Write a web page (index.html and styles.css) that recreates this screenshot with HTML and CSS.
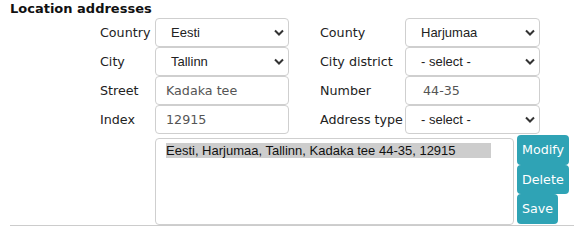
FILE: index.html
```html
<!DOCTYPE html>
<html lang="en">
<head>
  <meta charset="UTF-8" />
  <title>Location addresses</title>
  <link rel="stylesheet" href="styles.css">
</head>
<body>
  <div class="section">
    <h4 class="section-title">Location addresses</h4>

    <div class="address-form">
      <label class="field-label">Country</label>
      <div class="select-box"><span>Eesti</span><svg viewBox="0 0 10 6"><path d="M1 1l4 4 4-4"/></svg></div>
      <label class="field-label second">County</label>
      <div class="select-box"><span>Harjumaa</span><svg viewBox="0 0 10 6"><path d="M1 1l4 4 4-4"/></svg></div>

      <label class="field-label">City</label>
      <div class="select-box"><span>Tallinn</span><svg viewBox="0 0 10 6"><path d="M1 1l4 4 4-4"/></svg></div>
      <label class="field-label second">City district</label>
      <div class="select-box"><span>- select -</span><svg viewBox="0 0 10 6"><path d="M1 1l4 4 4-4"/></svg></div>

      <label class="field-label">Street</label>
      <div class="text-box">Kadaka tee</div>
      <label class="field-label second">Number</label>
      <div class="text-box number">44-35</div>

      <label class="field-label">Index</label>
      <div class="text-box">12915</div>
      <label class="field-label second">Address type</label>
      <div class="select-box"><span>- select -</span><svg viewBox="0 0 10 6"><path d="M1 1l4 4 4-4"/></svg></div>
    </div>

    <div class="address-list-row">
      <div class="address-list">
        <div class="address-item selected">Eesti, Harjumaa, Tallinn, Kadaka tee 44-35, 12915</div>
      </div>
      <div class="list-actions">
        <button class="btn">Modify</button>
        <button class="btn">Delete</button>
        <button class="btn">Save</button>
      </div>
    </div>
  </div>
</body>
</html>
```

FILE: styles.css
```css
* {
  margin: 0;
  padding: 0;
  box-sizing: border-box;
}

body {
  background-color: white;
  font-family: "DejaVu Sans", Verdana, sans-serif;
  font-size: 13px;
  color: #222;
}

.section {
  margin: 0 5px 0 10px;
  padding-top: 1px;
  border-bottom: 1px solid #ccc;
}

.section-title {
  font-size: 13px;
  font-weight: bold;
  color: #111;
  line-height: 16px;
}

.address-form {
  display: grid;
  grid-template-columns: 55px 134px 116px 135px;
  grid-auto-rows: 29px;
  margin-left: 90px;
  margin-top: 1px;
}

.field-label {
  display: flex;
  align-items: center;
  font-size: 12.7px;
  white-space: nowrap;
}

.field-label.second {
  padding-left: 31px;
}

.select-box,
.text-box {
  border: 1px solid #cfcfcf;
  border-radius: 4px;
  display: flex;
  align-items: center;
  height: 29px;
  background: white;
}

.select-box {
  font-family: "Liberation Sans", Arial, sans-serif;
  font-size: 13px;
  color: #222;
  padding: 0 4px 0 15px;
  justify-content: space-between;
}

.select-box svg {
  width: 10px;
  height: 7px;
  fill: none;
  stroke: #333;
  stroke-width: 2;
}

.text-box {
  color: #555;
  padding-left: 10px;
  font-size: 12.7px;
}

.text-box.number {
  padding-left: 17px;
}

.address-list-row {
  display: flex;
  align-items: flex-start;
  margin-left: 145px;
  margin-top: 1px;
}

.address-list {
  width: 359px;
  height: 87px;
  margin-top: 3px;
  border: 1px solid #cfcfcf;
  border-radius: 4px;
  padding: 4px 22px 0 10px;
  font-family: "Liberation Sans", Arial, sans-serif;
  font-size: 13px;
}

.address-item {
  line-height: 15px;
  color: #111;
}

.address-item.selected {
  background-color: #cdcdcd;
}

.list-actions {
  display: flex;
  flex-direction: column;
  align-items: flex-start;
  margin-left: 3px;
}

.btn {
  background-color: #2fa3b5;
  color: white;
  border: none;
  border-radius: 4px;
  font-family: "DejaVu Sans", Verdana, sans-serif;
  font-size: 12.7px;
  height: 29.5px;
  padding: 0 5px;
}
```
